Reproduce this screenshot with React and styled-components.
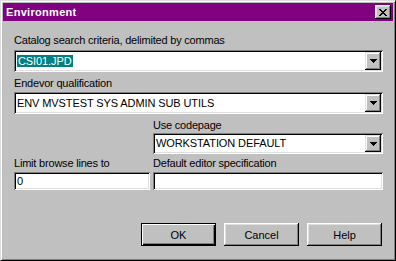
import React from "react";
import styled, { createGlobalStyle } from "styled-components";

const Global = createGlobalStyle`
  html, body { margin: 0; padding: 0; background: #c0c0c0; }
  body { font-family: "Liberation Sans", Arial, sans-serif; font-size: 11px; }
  * { box-sizing: border-box; }
`;

const Window = styled.div`
  width: 396px;
  height: 261px;
  background: #c0c0c0;
  border: 1px solid;
  border-color: #dfdfdf #000 #000 #dfdfdf;
  box-shadow: inset 1px 1px #fff, inset -1px -1px #808080;
  padding: 2px;
  display: flex;
  flex-direction: column;
`;

const TitleBar = styled.div`
  height: 18px;
  background: #800080;
  display: flex;
  align-items: center;
  justify-content: space-between;
  padding: 0 2px 0 3px;
`;

const Title = styled.span`
  color: #fff;
  font-weight: bold;
  font-size: 11px;
  letter-spacing: 0.3px;
`;

const CloseButton = styled.div`
  width: 16px;
  height: 14px;
  background: #c0c0c0;
  box-shadow: inset -1px -1px #000, inset 1px 1px #fff, inset -2px -2px #808080, inset 2px 2px #dfdfdf;
  display: flex;
  align-items: center;
  justify-content: center;
`;

const Body = styled.div`
  flex: 1;
  display: flex;
  flex-direction: column;
  padding: 13px 10px 0 11px;
`;

const Label = styled.div`
  height: 13px;
  line-height: 13px;
  color: #000;
  margin-bottom: ${(p) => p.$gap ?? 3}px;
  margin-left: ${(p) => p.$indent || 0}px;
  white-space: nowrap;
  letter-spacing: -0.2px;
`;

const Sunken = styled.div`
  background: #fff;
  box-shadow: inset 1px 1px #808080, inset -1px -1px #fff, inset 2px 2px #000, inset -2px -2px #dfdfdf;
  padding: 2px;
  display: flex;
  align-items: center;
`;

const Combo = styled(Sunken)`
  height: ${(p) => p.$height || 22}px;
  width: ${(p) => (p.$width ? `${p.$width}px` : "100%")};
  margin-left: ${(p) => p.$indent || 0}px;
`;

const Field = styled(Sunken)`
  height: 18px;
`;

const Value = styled.div`
  flex: 1;
  padding-left: 1px;
  line-height: 13px;
  white-space: nowrap;
  overflow: hidden;
  letter-spacing: -0.1px;
`;

const Selected = styled.span`
  background: #008080;
  color: #fff;
  padding: 0 1px;
`;

const DropButton = styled.div`
  width: 16px;
  align-self: stretch;
  background: #c0c0c0;
  box-shadow: inset -1px -1px #000, inset 1px 1px #dfdfdf, inset -2px -2px #808080, inset 2px 2px #fff;
  display: flex;
  align-items: center;
  justify-content: center;
`;

const Arrow = () => (
  <svg width="7" height="4" viewBox="0 0 7 4">
    <path d="M0 0H7L3.5 4Z" fill="#000" shapeRendering="crispEdges" />
  </svg>
);

const Section = styled.div`
  margin-top: ${(p) => p.$top || 0}px;
  display: flex;
  flex-direction: column;
`;

const Grid = styled.div`
  display: grid;
  grid-template-columns: 136px 230px;
  column-gap: 3px;
  margin-top: 3px;
`;

const Buttons = styled.div`
  display: flex;
  justify-content: flex-end;
  gap: 8px;
  margin-top: 33px;
  padding-right: 1px;
`;

const Button = styled.div`
  width: 75px;
  height: 23px;
  background: #c0c0c0;
  display: flex;
  align-items: center;
  justify-content: center;
  ${(p) =>
    p.$default
      ? `border: 1px solid #000; box-shadow: inset 1px 1px #fff, inset -1px -1px #000, inset -2px -2px #808080;`
      : `box-shadow: inset -1px -1px #000, inset 1px 1px #fff, inset -2px -2px #808080, inset 2px 2px #dfdfdf;`}
`;

const ComboBox = ({ children, width, indent, height }) => (
  <Combo $width={width} $indent={indent} $height={height}>
    <Value>{children}</Value>
    <DropButton>
      <Arrow />
    </DropButton>
  </Combo>
);

export default function App() {
  return (
    <>
      <Global />
      <Window>
        <TitleBar>
          <Title>Environment</Title>
          <CloseButton>
            <svg width="8" height="7" viewBox="0 0 8 7">
              <path d="M0 0h2v1h-2zM6 0h2v1h-2zM1 1h2v1h-2zM5 1h2v1h-2zM2 2h4v1h-4zM3 3h2v1h-2zM2 4h4v1h-4zM1 5h2v1h-2zM5 5h2v1h-2zM0 6h2v1h-2zM6 6h2v1h-2z" fill="#000" />
            </svg>
          </CloseButton>
        </TitleBar>
        <Body>
          <Section>
            <Label>Catalog search criteria, delimited by commas</Label>
            <ComboBox>
              <Selected>CSI01.JPD</Selected>
            </ComboBox>
          </Section>
          <Section $top={5}>
            <Label $gap={2}>Endevor qualification</Label>
            <ComboBox>ENV MVSTEST SYS ADMIN SUB UTILS</ComboBox>
          </Section>
          <Section $top={5}>
            <Label $gap={1} $indent={139}>Use codepage</Label>
            <ComboBox width={230} indent={139} height={21}>WORKSTATION DEFAULT</ComboBox>
          </Section>
          <Grid>
            <Label $gap={2}>Limit browse lines to</Label>
            <Label $gap={2}>Default editor specification</Label>
            <Field>
              <Value>0</Value>
            </Field>
            <Field>
              <Value />
            </Field>
          </Grid>
          <Buttons>
            <Button $default>OK</Button>
            <Button>Cancel</Button>
            <Button>Help</Button>
          </Buttons>
        </Body>
      </Window>
    </>
  );
}
